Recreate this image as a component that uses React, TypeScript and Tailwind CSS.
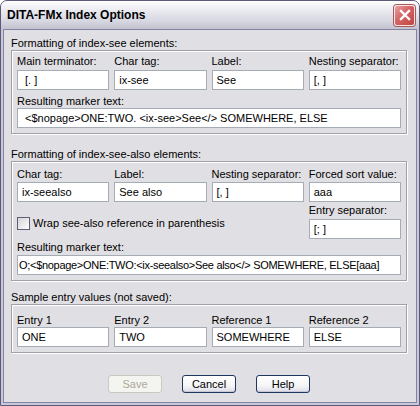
import React from "react";

const Input = ({ value, className = "" }: { value: string; className?: string }) => (
  <div
    className={`h-[20px] border border-[#a5acb5] bg-white leading-[18px] whitespace-pre overflow-hidden ${className}`}
  >
    {value}
  </div>
);

const Field = ({ label, value, gap = "mt-[2px]" }: { label: string; value: string; gap?: string }) => (
  <div className="flex flex-col min-w-0">
    <div className="h-[14px] leading-[14px] whitespace-nowrap">{label}</div>
    <div className={gap}>
      <Input value={value} className="pl-[4px]" />
    </div>
  </div>
);

const Btn = ({ label, disabled = false }: { label: string; disabled?: boolean }) =>
  disabled ? (
    <div className="w-[54px] h-[18px] rounded-[3px] border border-[#c9c8c2] bg-[#f4f4f0] text-[#aca899] flex items-center justify-center leading-none">
      {label}
    </div>
  ) : (
    <div className="w-[54px] h-[18px] rounded-[3px] border border-[#1f3660] bg-[linear-gradient(#ffffff,#f6f6f8_60%,#dcdce6)] shadow-[inset_0_-1px_0_#c8c8d6] flex items-center justify-center leading-none">
      {label}
    </div>
  );

export default function App() {
  return (
    <div className="w-[420px] h-[406px] font-['Liberation_Sans',Arial,sans-serif] text-[11px] text-black">
      <div className="w-full h-full flex flex-col rounded-t-[7px] border border-[#5a5a78] bg-[#c8c8d8] overflow-hidden">
        {/* Title bar */}
        <div className="h-[28px] shrink-0 flex items-center justify-between pl-[6px] pr-[4px] bg-[linear-gradient(#ffffff,#ececf2_30%,#d8d8e2_70%,#c2c2d0)]">
          <span className="font-bold text-[12px] text-black">DITA-FMx Index Options</span>
          <div className="w-[21px] h-[21px] rounded-[3px] border border-[#f4e4e4] shadow-[0_0_0_1px_#a65a5a] bg-[linear-gradient(135deg,#eaa0a0,#d46464_45%,#c04444)] flex items-center justify-center">
            <svg width="12" height="12" viewBox="0 0 12 12">
              <path d="M2 2 L10 10 M10 2 L2 10" stroke="white" strokeWidth="2.4" strokeLinecap="square" fill="none" />
            </svg>
          </div>
        </div>

        {/* Body */}
        <div className="flex-1 mx-[2px] mb-[2px] border border-[#8484a2] bg-[#e0dfe3] pt-[6px] pl-[7px] pr-[9px] flex flex-col">
          {/* Group 1 */}
          <div className="h-[14px] leading-[14px]">Formatting of index-see elements:</div>
          <div className="border border-[#a0a0a8] shadow-[inset_1px_1px_0_#ffffff,1px_1px_0_#ffffff] pt-[3px] pb-[5px] px-[5px]">
            <div className="grid grid-cols-4 gap-x-[5px]">
              <Field label="Main terminator:" value=" [. ]" />
              <Field label="Char tag:" value="ix-see" />
              <Field label="Label:" value="See" />
              <Field label="Nesting separator:" value="[, ]" />
            </div>
            <div className="mt-[4px] h-[14px] leading-[14px]">Resulting marker text:</div>
            <Input value=" <$nopage>ONE:TWO. <ix-see>See</> SOMEWHERE, ELSE" className="pl-[4px]" />
          </div>

          {/* Group 2 */}
          <div className="mt-[13px] h-[14px] leading-[14px]">Formatting of index-see-also elements:</div>
          <div className="border border-[#a0a0a8] shadow-[inset_1px_1px_0_#ffffff,1px_1px_0_#ffffff] pt-[5px] pb-[5px] px-[5px]">
            <div className="grid grid-cols-4 gap-x-[5px]">
              <Field label="Char tag:" value="ix-seealso" gap="mt-[1px]" />
              <Field label="Label:" value="See also" gap="mt-[1px]" />
              <Field label="Nesting separator:" value="[, ]" gap="mt-[1px]" />
              <Field label="Forced sort value:" value="aaa" gap="mt-[1px]" />
              <div className="col-span-3 pt-[14px]">
                <div className="flex items-center h-[14px]">
                  <div className="w-[13px] h-[13px] border border-[#5e5e74] bg-[linear-gradient(135deg,#d4d4d8,#f2f2f4_70%,#ffffff)]" />
                  <span className="ml-[3px] leading-[14px] whitespace-nowrap">Wrap see-also reference in parenthesis</span>
                </div>
              </div>
              <div className="mt-[1px]">
                <Field label="Entry separator:" value="[; ]" />
              </div>
            </div>
            <div className="mt-[1px] h-[14px] leading-[14px]">Resulting marker text:</div>
            <div className="mt-[1px]">
              <Input
                value="O;<$nopage>ONE:TWO:<ix-seealso>See also</> SOMEWHERE, ELSE[aaa]"
                className="pl-[1px] tracking-[-0.3px]"
              />
            </div>
          </div>

          {/* Group 3 */}
          <div className="mt-[9px] h-[14px] leading-[14px]">Sample entry values (not saved):</div>
          <div className="border border-[#a0a0a8] shadow-[inset_1px_1px_0_#ffffff,1px_1px_0_#ffffff] pt-[8px] pb-[5px] px-[5px]">
            <div className="grid grid-cols-4 gap-x-[5px]">
              <Field label="Entry 1" value="ONE" gap="mt-0" />
              <Field label="Entry 2" value="TWO" gap="mt-0" />
              <Field label="Reference 1" value="SOMEWHERE" gap="mt-0" />
              <Field label="Reference 2" value="ELSE" gap="mt-0" />
            </div>
          </div>

          {/* Buttons */}
          <div className="mt-[22px] flex justify-center gap-x-[20px]">
            <Btn label="Save" disabled />
            <Btn label="Cancel" />
            <Btn label="Help" />
          </div>
        </div>
      </div>
    </div>
  );
}
